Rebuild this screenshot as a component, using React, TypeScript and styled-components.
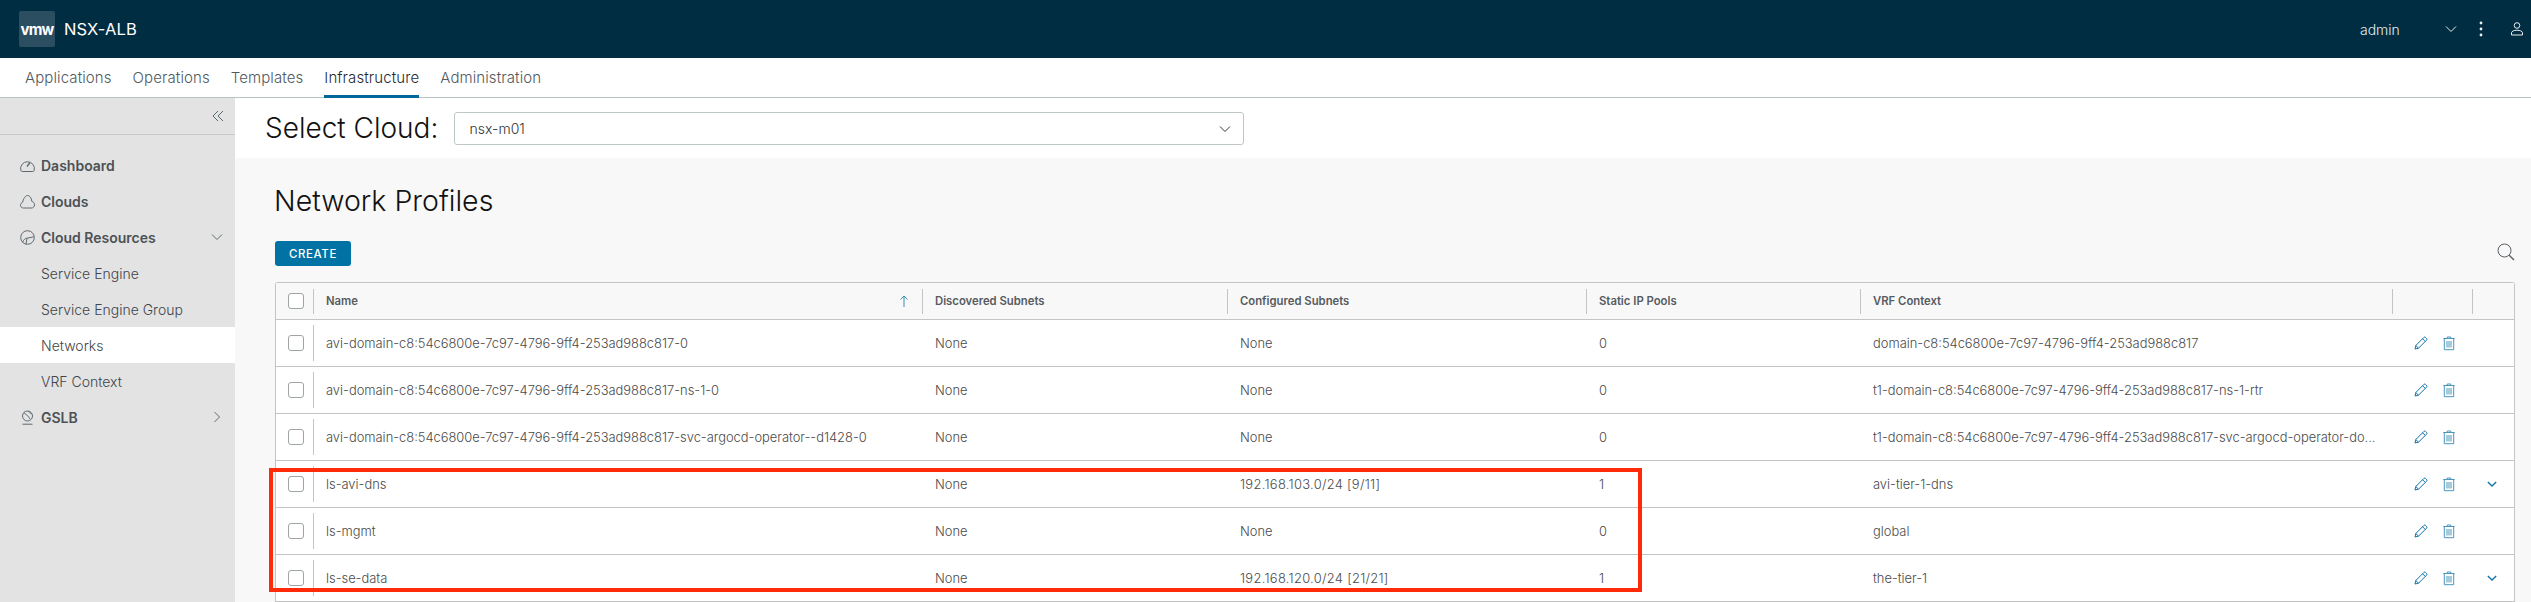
import React from "react";
import styled, { createGlobalStyle } from "styled-components";

const Global = createGlobalStyle`
  html, body { margin: 0; padding: 0; height: 602px; overflow: hidden; background: #fff; }
  body { font-family: Inter, "Open Sans", "Liberation Sans", sans-serif; }
  * { box-sizing: border-box; }
`;

const Page = styled.div`
  width: 2531px;
  height: 602px;
  display: flex;
  flex-direction: column;
  overflow: hidden;
  position: relative;
`;

const Header = styled.header`
  height: 58px;
  background: #002d42;
  color: #fff;
  display: flex;
  align-items: center;
  padding: 0 8px 0 19px;
  flex: none;
`;
const Logo = styled.div`
  width: 36px;
  height: 36px;
  border-radius: 2px;
  background: #2b4e60;
  display: flex;
  align-items: center;
  justify-content: center;
  font-size: 15px;
  font-weight: 700;
  letter-spacing: -0.8px;
  color: #fff;
`;
const Brand = styled.span`
  margin-left: 9px;
  font-size: 16.5px;
  font-weight: 400;
  letter-spacing: 0.1px;
`;
const HeaderRight = styled.div`
  margin-left: auto;
  display: flex;
  align-items: center;
  color: #e8edf0;
`;
const Admin = styled.span`
  font-size: 14px;
  font-weight: 300;
  width: 85px;
`;
const HeaderIcon = styled.span<{ $w: number }>`
  width: ${(p) => p.$w}px;
  display: flex;
  justify-content: center;
`;
const UserIcon = styled.span`
  width: 12px;
  margin-left: 6px;
  display: flex;
`;

const Tabs = styled.nav`
  height: 40px;
  flex: none;
  background: #fff;
  border-bottom: 1px solid #b9c4c6;
  display: flex;
  padding-left: 25px;
  gap: 21px;
`;
const Tab = styled.a<{ $active?: boolean }>`
  height: 40px;
  display: flex;
  align-items: center;
  padding-top: 1px;
  font-size: 15px;
  font-weight: 300;
  letter-spacing: 0.1px;
  color: ${(p) => (p.$active ? "#1f2a30" : "#4f5a60")};
  border-bottom: 3px solid ${(p) => (p.$active ? "#00679b" : "transparent")};
`;

const Body = styled.div`
  flex: 1;
  display: flex;
  min-height: 0;
`;
const Side = styled.aside`
  width: 235px;
  flex: none;
  background: #e3e3e3;
`;
const Collapse = styled.div`
  height: 37px;
  border-bottom: 1px solid #c9c9c9;
  display: flex;
  align-items: center;
  justify-content: flex-end;
  padding-right: 11px;
  margin-bottom: 12px;
  color: #5b6a72;
`;
const SideItem = styled.div<{ $active?: boolean; $sub?: boolean }>`
  height: 36px;
  display: flex;
  align-items: center;
  padding-left: ${(p) => (p.$sub ? "41px" : "20px")};
  padding-right: 12px;
  font-size: 14px;
  font-weight: ${(p) => (p.$sub ? 300 : 600)};
  color: ${(p) => (p.$sub ? "#3f4549" : "#4c5155")};
  background: ${(p) => (p.$active ? "#fff" : "transparent")};
`;
const SideIcon = styled.span`
  width: 21px;
  flex: none;
  display: flex;
  color: #5f6a70;
`;
const SideChevron = styled.span`
  margin-left: auto;
  display: flex;
  color: #5f6a70;
`;

const Main = styled.main`
  flex: 1;
  min-width: 0;
  display: flex;
  flex-direction: column;
  background: #f8f8f8;
`;
const CloudBar = styled.div`
  height: 60px;
  background: #fff;
  display: flex;
  align-items: center;
  padding: 1px 0 0 30px;
  flex: none;
`;
const CloudLabel = styled.label`
  font-size: 28px;
  font-weight: 300;
  color: #111;
  width: 188.5px;
  white-space: nowrap;
  padding-bottom: 2px;
`;
const CloudSelect = styled.div`
  width: 790px;
  height: 33px;
  border: 1px solid #bfc6c8;
  border-radius: 3px;
  background: #fff;
  display: flex;
  align-items: center;
  justify-content: space-between;
  padding: 0 12px 0 15px;
  font-size: 14px;
  font-weight: 300;
  color: #333;
`;
const Content = styled.div`
  padding: 0 16px 0 40px;
`;
const Title = styled.h1`
  margin: 26px 0 0 -1px;
  height: 34px;
  line-height: 34px;
  font-size: 28.5px;
  font-weight: 300;
  color: #111;
`;
const ToolRow = styled.div`
  margin-top: 23px;
  height: 25px;
  display: flex;
  justify-content: space-between;
`;
const CreateBtn = styled.button`
  width: 76px;
  height: 25px;
  border: 0;
  border-radius: 3px;
  background: #0072a3;
  color: #fff;
  font: 500 11.5px Inter, sans-serif;
  letter-spacing: 0.6px;
  padding: 0;
`;
const SearchWrap = styled.span`
  display: flex;
  margin-top: 2px;
  color: #5a5f63;
`;

const Table = styled.div`
  margin-top: 16px;
  border: 1px solid #c4c4c4;
  border-bottom: 0;
  border-radius: 3px 3px 0 0;
  background: #fff;
`;
const Row = styled.div<{ $head?: boolean }>`
  display: grid;
  grid-template-columns: 37px 609px 305px 359px 274px 532px 80px 42px;
  align-items: center;
  height: ${(p) => (p.$head ? "37px" : "47px")};
  border-bottom: 1px solid #c4c4c4;
  background: ${(p) => (p.$head ? "#f8f8f8" : "#fff")};
`;
const Cell = styled.div<{ $head?: boolean; $sep?: boolean }>`
  min-width: 0;
  display: flex;
  align-items: center;
  justify-content: space-between;
  height: ${(p) => (p.$head ? "25px" : "36px")};
  padding-left: ${(p) => (p.$sep ? "12px" : "13px")};
  font-size: ${(p) => (p.$head ? "11.3px" : "12.9px")};
  font-weight: ${(p) => (p.$head ? 600 : 300)};
  color: ${(p) => (p.$head ? "#565b5f" : "#4a4a4a")};
  border-left: ${(p) => (p.$sep ? "1px solid #c4c4c4" : "0")};
`;
const CellText = styled.span<{ $spaced?: boolean }>`
  white-space: nowrap;
  letter-spacing: ${(p) => (p.$spaced ? "0.3px" : "0")};
`;
const SortArrow = styled.svg`
  margin-right: 13px;
`;
const CheckCell = styled.div`
  display: flex;
  padding-left: 12px;
`;
const Check = styled.span`
  width: 16px;
  height: 16px;
  border: 1px solid #9fa4a7;
  border-radius: 3px;
  background: #fff;
`;
const Actions = styled.div`
  display: flex;
  align-items: center;
  gap: 15px;
  padding-left: 22px;
  color: #0f74a8;
`;
const Expand = styled.div`
  display: flex;
  padding-left: 15px;
  color: #0f74a8;
`;
const Highlight = styled.div`
  position: absolute;
  left: 269px;
  top: 468px;
  width: 1373px;
  height: 124px;
  border: 4px solid #ff2a0a;
`;

const Chevron = ({ dir = "down", size = 12, weight = 1 }: { dir?: "down" | "right"; size?: number; weight?: number }) => (
  <svg width={size} height={size} viewBox="0 0 12 12" fill="none" stroke="currentColor" strokeWidth={weight}>
    {dir === "down" ? <path d="M1 3.500 6 8.500 11 3.500" /> : <path d="M3.500 1 8.500 6 3.500 11" />}
  </svg>
);
const Pencil = () => (
  <svg width="14" height="14" viewBox="0 0 14 14" fill="none" stroke="currentColor" strokeWidth="1">
    <path d="M1 13 1.800 9.500 9.800 1.500a1.300 1.300 0 0 1 1.900 0l.8.8a1.300 1.300 0 0 1 0 1.900L4.500 12.200Z" />
    <path d="M8.600 2.800 11.200 5.400M1.800 9.500 4.500 12.200" />
  </svg>
);
const Trash = () => (
  <svg width="12" height="15" viewBox="0 0 12 15" fill="none" stroke="currentColor" strokeWidth="1" opacity=".75">
    <path d="M1.300 2.500v11.200h9.400V2.500M.3 2.500h11.400" />
    <path d="M4 5v6.500M6 5v6.500M8 5v6.500M4.200 2.500V1h3.600v1.500" />
  </svg>
);

const icons = {
  dash: (
    <svg width="15" height="15" viewBox="0 0 15 15" fill="none" stroke="currentColor" strokeWidth="1">
      <path d="M2.200 13.500a1.500 1.500 0 0 1-1.400-1.200 6.900 6.900 0 1 1 13.400 0 1.500 1.500 0 0 1-1.400 1.200Z" />
      <path d="M7 8.500 10 4.500" strokeWidth="1.400" />
    </svg>
  ),
  cloud: (
    <svg width="15" height="15" viewBox="0 0 15 15" fill="none" stroke="currentColor" strokeWidth="1">
      <path d="M3.500 14C1.600 14 .5 12.700.5 11.200c0-1.400.9-2.500 2.100-2.900C3.300 5 5.300 1.500 7.500 1.500c2.400 0 3.900 2.500 4.300 5.800 1.600.3 2.700 1.800 2.700 3.600 0 1.700-1.200 3.100-3.200 3.100Z" />
    </svg>
  ),
  res: (
    <svg width="15" height="15" viewBox="0 0 15 15" fill="none" stroke="currentColor" strokeWidth="1">
      <circle cx="7.500" cy="7.500" r="6.800" />
      <path d="M2.500 12.300C3.800 9.500 5 8.500 7 8.200l6.900-1.400M7 8.200 6 14.200" />
    </svg>
  ),
  gslb: (
    <svg width="15" height="15" viewBox="0 0 15 15" fill="none" stroke="currentColor" strokeWidth="1">
      <circle cx="7.500" cy="6" r="5" />
      <path d="M3.800 2.800c2 .5 2 2 3.500 2.700S9 8 10 9M8 1.200c1 1 2.500 1 3.500 3M2.500 14.200h10" />
    </svg>
  ),
};

const data = [
  ["avi-domain-c8:54c6800e-7c97-4796-9ff4-253ad988c817-0", "None", "0", "domain-c8:54c6800e-7c97-4796-9ff4-253ad988c817", false],
  ["avi-domain-c8:54c6800e-7c97-4796-9ff4-253ad988c817-ns-1-0", "None", "0", "t1-domain-c8:54c6800e-7c97-4796-9ff4-253ad988c817-ns-1-rtr", false],
  ["avi-domain-c8:54c6800e-7c97-4796-9ff4-253ad988c817-svc-argocd-operator--d1428-0", "None", "0", "t1-domain-c8:54c6800e-7c97-4796-9ff4-253ad988c817-svc-argocd-operator-do...", false],
  ["ls-avi-dns", "192.168.103.0/24 [9/11]", "1", "avi-tier-1-dns", true],
  ["ls-mgmt", "None", "0", "global", false],
  ["ls-se-data", "192.168.120.0/24 [21/21]", "1", "the-tier-1", true],
] as const;

export default function App() {
  return (
    <Page>
      <Global />
      <Header>
        <Logo>vmw</Logo>
        <Brand>NSX-ALB</Brand>
        <HeaderRight>
          <Admin>admin</Admin>
          <HeaderIcon $w={12}><Chevron /></HeaderIcon>
          <HeaderIcon $w={48}>
            <svg width="4" height="16" viewBox="0 0 4 16" fill="currentColor">
              <circle cx="2" cy="2" r="1.400" /><circle cx="2" cy="8" r="1.400" /><circle cx="2" cy="14" r="1.400" />
            </svg>
          </HeaderIcon>
          <UserIcon>
            <svg width="12" height="14" viewBox="0 0 12 14" fill="none" stroke="currentColor" strokeWidth="1">
              <circle cx="6" cy="3.500" r="2.800" />
              <path d="M.5 13v-2.200C.5 9.300 3 8.200 6 8.200s5.500 1.100 5.500 2.600V13Z" />
            </svg>
          </UserIcon>
        </HeaderRight>
      </Header>
      <Tabs>
        <Tab>Applications</Tab>
        <Tab>Operations</Tab>
        <Tab>Templates</Tab>
        <Tab $active>Infrastructure</Tab>
        <Tab>Administration</Tab>
      </Tabs>
      <Body>
        <Side>
          <Collapse>
            <svg width="12" height="12" viewBox="0 0 12 12" fill="none" stroke="currentColor">
              <path d="M6 1 1 6 6 11M11 1 6 6 11 11" />
            </svg>
          </Collapse>
          <SideItem><SideIcon>{icons.dash}</SideIcon>Dashboard</SideItem>
          <SideItem><SideIcon>{icons.cloud}</SideIcon>Clouds</SideItem>
          <SideItem><SideIcon>{icons.res}</SideIcon>Cloud Resources<SideChevron><Chevron /></SideChevron></SideItem>
          <SideItem $sub>Service Engine</SideItem>
          <SideItem $sub>Service Engine Group</SideItem>
          <SideItem $sub $active>Networks</SideItem>
          <SideItem $sub>VRF Context</SideItem>
          <SideItem><SideIcon>{icons.gslb}</SideIcon>GSLB<SideChevron><Chevron dir="right" /></SideChevron></SideItem>
        </Side>
        <Main>
          <CloudBar>
            <CloudLabel>Select Cloud:</CloudLabel>
            <CloudSelect>nsx-m01<Chevron /></CloudSelect>
          </CloudBar>
          <Content>
            <Title>Network Profiles</Title>
            <ToolRow>
              <CreateBtn>CREATE</CreateBtn>
              <SearchWrap>
                <svg width="18" height="18" viewBox="0 0 18 18" fill="none" stroke="currentColor">
                  <circle cx="7.500" cy="7.500" r="6.500" />
                  <path d="M12.200 12.200 17 17" strokeWidth="1.400" />
                </svg>
              </SearchWrap>
            </ToolRow>
            <Table>
              <Row $head>
                <CheckCell><Check /></CheckCell>
                <Cell $head $sep>
                  <CellText>Name</CellText>
                  <SortArrow width="10" height="12" viewBox="0 0 10 12" fill="none" stroke="#3a8fb7">
                    <path d="M5 12V1M1.500 4.500 5 1 8.500 4.500" />
                  </SortArrow>
                </Cell>
                <Cell $head $sep><CellText>Discovered Subnets</CellText></Cell>
                <Cell $head $sep><CellText>Configured Subnets</CellText></Cell>
                <Cell $head $sep><CellText>Static IP Pools</CellText></Cell>
                <Cell $head $sep><CellText>VRF Context</CellText></Cell>
                <Cell $head $sep />
                <Cell $head $sep />
              </Row>
              {data.map(([name, conf, pools, vrf, more]) => (
                <Row key={name}>
                  <CheckCell><Check /></CheckCell>
                  <Cell $sep><CellText>{name}</CellText></Cell>
                  <Cell><CellText>None</CellText></Cell>
                  <Cell><CellText $spaced={conf !== "None"}>{conf}</CellText></Cell>
                  <Cell><CellText>{pools}</CellText></Cell>
                  <Cell><CellText>{vrf}</CellText></Cell>
                  <Actions><Pencil /><Trash /></Actions>
                  <Expand>{more && <Chevron size={10} weight={1.600} />}</Expand>
                </Row>
              ))}
            </Table>
          </Content>
        </Main>
      </Body>
      <Highlight />
    </Page>
  );
}
